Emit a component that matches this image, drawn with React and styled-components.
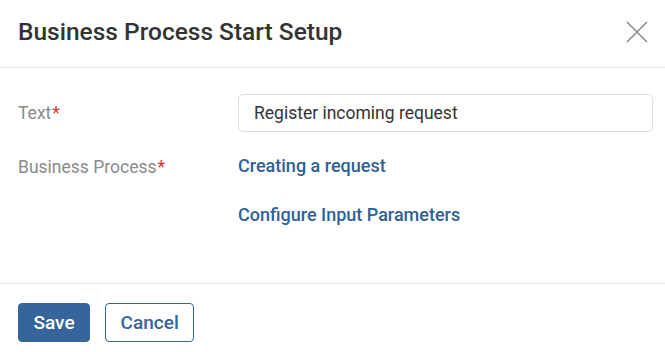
import React from "react";
import styled, { createGlobalStyle } from "styled-components";

const Global = createGlobalStyle`
  html, body { margin: 0; padding: 0; background: #fff; }
  body { font-family: Roboto, "Liberation Sans", Arial, sans-serif; }
  * { box-sizing: border-box; }
`;

const Dialog = styled.div`
  width: 665px;
  height: 352px;
  display: flex;
  flex-direction: column;
  background: #fff;
`;

const Header = styled.div`
  height: 68px;
  display: flex;
  align-items: center;
  justify-content: space-between;
  padding: 0 16px 4px 18px;
  border-bottom: 1px solid #e3e3e3;
`;

const Title = styled.h1`
  margin: 0;
  font-size: 24.5px;
  font-weight: 500;
  color: #333;
`;

const CloseButton = styled.button`
  border: 0;
  background: none;
  padding: 0;
  width: 24px;
  height: 24px;
  display: flex;
  align-items: center;
  justify-content: center;
  cursor: pointer;
`;

const Body = styled.div`
  flex: 1;
  padding: 26px 12px 0 18px;
  display: grid;
  grid-template-columns: 220px 1fr;
  grid-auto-rows: min-content;
`;

const Label = styled.div`
  font-size: 17.5px;
  color: #8a8a8a;
  height: ${(p) => p.$h}px;
  display: flex;
  align-items: ${(p) => (p.$top ? "flex-start" : "center")};
  padding-top: ${(p) => (p.$top ? p.$pt : 0)}px;
  line-height: 22px;
`;

const Star = styled.span`
  color: #d9322e;
  margin-left: 1px;
`;

const Input = styled.input`
  width: 100%;
  height: 38px;
  border: 1px solid #dcdcdc;
  border-radius: 5px;
  padding: 0 15px;
  font-family: inherit;
  font-size: 17.5px;
  color: #333;
  outline: none;
`;

const Links = styled.div`
  display: flex;
  flex-direction: column;
  gap: 27px;
  padding-top: 23px;
`;

const Link = styled.a`
  font-size: 18px;
  font-weight: 500;
  color: #2f6197;
  text-decoration: none;
  line-height: 22px;
  cursor: pointer;
`;

const Footer = styled.div`
  height: 69px;
  border-top: 1px solid #e3e3e3;
  display: flex;
  align-items: flex-start;
  gap: 15px;
  padding: 19px 18px 0;
`;

const Button = styled.button`
  height: 39px;
  padding: 0 14.5px;
  border-radius: 4px;
  font-family: inherit;
  font-size: 19px;
  font-weight: 500;
  cursor: pointer;
  border: 1px solid #35659a;
  background: ${(p) => (p.$primary ? "#35659a" : "#fff")};
  color: ${(p) => (p.$primary ? "#fff" : "#35659a")};
`;

export default function App() {
  return (
    <>
      <Global />
      <Dialog>
        <Header>
          <Title>Business Process Start Setup</Title>
          <CloseButton aria-label="Close">
            <svg width="22" height="22" viewBox="0 0 22 22">
              <path d="M1 1L21 21M21 1L1 21" stroke="#8c8c8c" strokeWidth="1.6" fill="none" />
            </svg>
          </CloseButton>
        </Header>
        <Body>
          <Label $h={38}>
            Text<Star>*</Star>
          </Label>
          <Input defaultValue="Register incoming request" />
          <Label $top $pt={24} $h={120}>
            Business Process<Star>*</Star>
          </Label>
          <Links>
            <Link>Creating a request</Link>
            <Link>Configure Input Parameters</Link>
          </Links>
        </Body>
        <Footer>
          <Button $primary>Save</Button>
          <Button>Cancel</Button>
        </Footer>
      </Dialog>
    </>
  );
}
